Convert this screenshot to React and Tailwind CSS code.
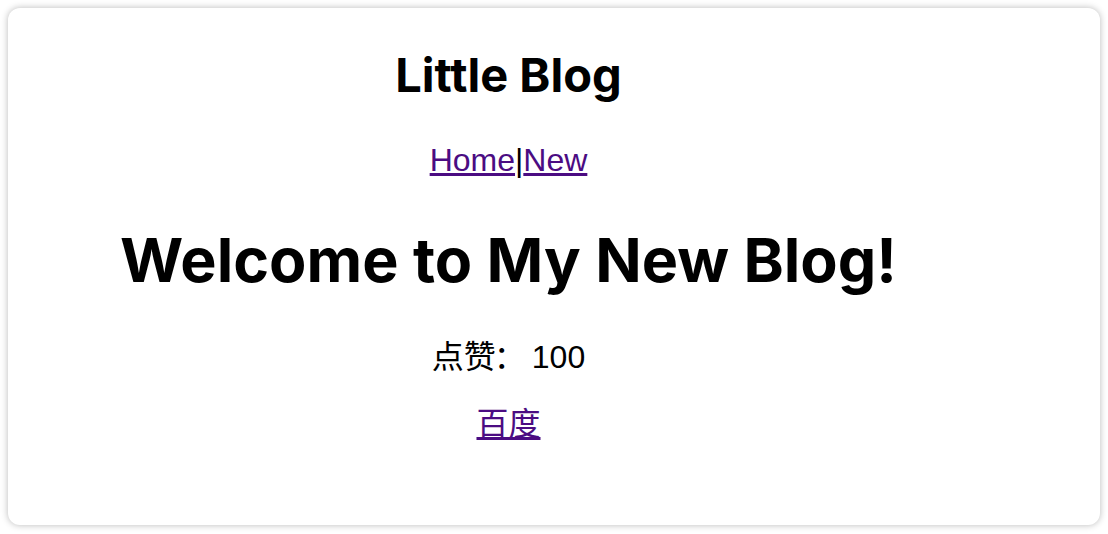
export default function App() {
  return (
    <div className="w-[1108px] h-[534px] bg-white p-2 text-black">
      <div className="h-[517px] w-[1092px] rounded-xl bg-white shadow-[0_0_7px_rgba(0,0,0,0.28)]">
        <div className="w-[1001px] text-center pt-[39px] font-['Liberation_Sans','Noto_Sans_CJK_SC',sans-serif]">
          <h1 className="h-[56px] text-[47px] leading-[56px] font-bold font-['Inter',sans-serif]">Little Blog</h1>
          <nav className="mt-[39px] h-[36px] text-[32px] leading-[36px]">
            <a href="#" className="underline text-[#4b0c82]">Home</a>|<a href="#" className="underline text-[#4b0c82]">New</a>
          </nav>
          <h2 className="mt-[46px] h-[72px] text-[61px] leading-[72px] font-bold font-['Inter',sans-serif]">Welcome to My New Blog!</h2>
          <p className="mt-[43px] h-[36px] text-[32px] leading-[36px]">
            点赞<span className="inline-block -ml-[2px] mr-[6px]">：</span>100
          </p>
          <p className="mt-[31px] h-[36px] text-[32px] leading-[36px]">
            <a href="#" className="underline text-[#4b0c82]">百度</a>
          </p>
        </div>
      </div>
    </div>
  );
}
